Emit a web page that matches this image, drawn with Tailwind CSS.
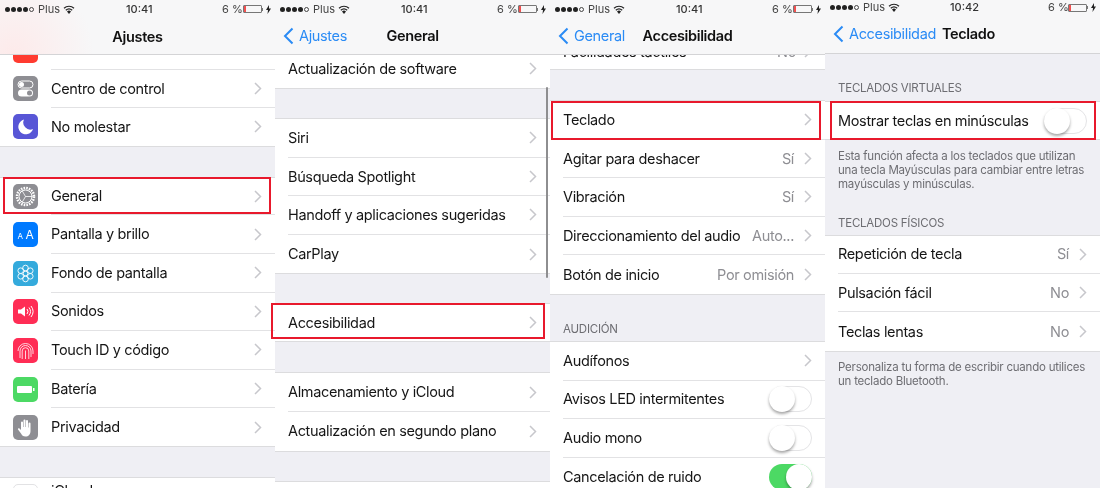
<!DOCTYPE html>
<html lang="es">
<head>
<meta charset="utf-8">
<script src="https://cdn.jsdelivr.net/npm/@tailwindcss/browser@4"></script>
</head>
<body class="m-0 bg-[#efeff4]">
<div class="relative flex h-[488px] w-[1100px] overflow-hidden font-['Inter','Liberation_Sans',sans-serif] text-[14.5px] tracking-[-0.35px] text-[#161616]">

<!-- PANEL 1 -->
<section class="relative h-full w-[275px] shrink-0 overflow-hidden bg-[#efeff4] blur-[0.35px]">
  <header class="relative z-10 h-[55px] border-b border-[#d4d4d6] bg-[radial-gradient(circle_at_5%_100%,#fdeaea_0,#f7f7f8_30%)]">
    <div class="flex h-[18px] items-center whitespace-nowrap pl-[5px] text-[11px] tracking-normal">
      <div class="flex w-[33px] shrink-0 items-center gap-[1px]"><i class="size-[5px] rounded-full bg-[#222]"></i><i class="size-[5px] rounded-full bg-[#222]"></i><i class="size-[5px] rounded-full bg-[#222]"></i><i class="size-[5px] rounded-full bg-[#222]"></i><i class="size-[5px] rounded-full border border-[#444]"></i></div>
      <span class="w-[25px] shrink-0 text-[#444]">Plus</span>
      <svg class="w-[12px] shrink-0" viewBox="0 0 12 9" height="9"><path d="M6 9 4 6.5a3 3 0 0 1 4 0Z" fill="#222"/><path d="M2.8 5.2a4.8 4.8 0 0 1 6.4 0M1 3.2a7.4 7.4 0 0 1 10 0" fill="none" stroke="#222" stroke-width="1.2"/></svg>
      <span class="ml-[51px] w-[96px] shrink-0 font-medium text-[#333]">10:41</span>
      <span class="w-[21px] shrink-0 text-[#444]">6 %</span>
      <div class="flex h-[8px] w-[19px] shrink-0 rounded-[1px] border border-[#777]"><div class="h-full w-[1.5px] bg-[#f05050]"></div></div>
      <i class="h-[3px] w-[1px] shrink-0 bg-[#777]"></i>
      <svg class="ml-[3px] shrink-0" width="5" height="9" viewBox="0 0 5 9"><path d="M3 0 0 5h2L1.5 9 5 3.5H3Z" fill="#222"/></svg>
    </div>
    <h1 class="mt-[8px] text-center text-[14.5px] font-semibold text-[#111]">Ajustes</h1>
  </header>
  <div class="-mt-[24px]">
    <div class="flex h-[38.6px] items-center bg-white pl-[13px]">
      <div class="size-[25px] shrink-0 rounded-[5px] bg-[#ff3b30]"></div>
      <div class="ml-[13px] flex h-full flex-1 border-b border-[#e2e2e4]"></div>
    </div>
    <div class="flex h-[38.6px] items-center bg-white pl-[13px]">
      <svg class="size-[25px] shrink-0" viewBox="0 0 25 25"><rect width="25" height="25" rx="5" fill="#8e8e93"/><rect x="5" y="5" width="15" height="7" rx="3.5" fill="none" stroke="#fff"/><circle cx="8.5" cy="8.5" r="2.5" fill="#fff"/><rect x="5" y="13.5" width="15" height="7" rx="3.5" fill="#fff"/><circle cx="16.5" cy="17" r="2.5" fill="#8e8e93"/></svg>
      <div class="ml-[13px] flex h-full flex-1 items-center justify-between border-b border-[#e2e2e4] pr-[13px]"><span>Centro de control</span><svg width="8" height="13" viewBox="0 0 8 13"><path d="m1 1 5.5 5.5L1 12" fill="none" stroke="#c7c7cc" stroke-width="1.5"/></svg></div>
    </div>
    <div class="flex h-[38.6px] items-center border-b border-[#dcdcde] bg-white pl-[13px]">
      <svg class="size-[25px] shrink-0" viewBox="0 0 25 25"><rect width="25" height="25" rx="5" fill="#5856d6"/><path d="M11 5.5a7.5 7.5 0 1 0 9 9.5 7 7 0 0 1-9-9.5Z" fill="#fff"/></svg>
      <div class="ml-[13px] flex h-full flex-1 items-center justify-between pr-[13px]"><span>No molestar</span><svg width="8" height="13" viewBox="0 0 8 13"><path d="m1 1 5.5 5.5L1 12" fill="none" stroke="#c7c7cc" stroke-width="1.5"/></svg></div>
    </div>
    <div class="h-[30px]"></div>
    <div class="flex h-[38.6px] items-center border-t border-[#dcdcde] bg-white pl-[13px]">
      <svg class="size-[25px] shrink-0" viewBox="0 0 25 25"><rect width="25" height="25" rx="5" fill="#8e8e93"/><circle cx="12.5" cy="12.5" r="8.5" fill="none" stroke="#fff" stroke-width="2.5" stroke-dasharray="1.6 1.1"/><circle cx="12.5" cy="12.5" r="6.5" fill="none" stroke="#fff" stroke-width="1"/><path d="M12.5 12.5 9 6.5M12.5 12.5h7M12.5 12.5 9 18.5" stroke="#fff" stroke-width=".8"/></svg>
      <div class="ml-[13px] flex h-full flex-1 items-center justify-between border-b border-[#e2e2e4] pr-[13px]"><span>General</span><svg width="8" height="13" viewBox="0 0 8 13"><path d="m1 1 5.5 5.5L1 12" fill="none" stroke="#c7c7cc" stroke-width="1.5"/></svg></div>
    </div>
    <div class="flex h-[38.6px] items-center bg-white pl-[13px]">
      <div class="flex size-[25px] shrink-0 items-baseline justify-center gap-[3px] rounded-[5px] bg-[#007aff] text-white"><span class="text-[8px] leading-[25px]">A</span><span class="text-[12px] leading-[25px]">A</span></div>
      <div class="ml-[13px] flex h-full flex-1 items-center justify-between border-b border-[#e2e2e4] pr-[13px]"><span>Pantalla y brillo</span><svg width="8" height="13" viewBox="0 0 8 13"><path d="m1 1 5.5 5.5L1 12" fill="none" stroke="#c7c7cc" stroke-width="1.5"/></svg></div>
    </div>
    <div class="flex h-[38.6px] items-center bg-white pl-[13px]">
      <svg class="size-[25px] shrink-0" viewBox="0 0 25 25" fill="none" stroke="#fff" stroke-width=".9"><rect width="25" height="25" rx="5" fill="#34aadc" stroke="none"/><circle cx="12.5" cy="12.5" r="2.3"/><circle cx="12.5" cy="7" r="2.8"/><circle cx="12.5" cy="18" r="2.8"/><circle cx="7.7" cy="9.7" r="2.8"/><circle cx="17.3" cy="9.7" r="2.8"/><circle cx="7.7" cy="15.3" r="2.8"/><circle cx="17.3" cy="15.3" r="2.8"/></svg>
      <div class="ml-[13px] flex h-full flex-1 items-center justify-between border-b border-[#e2e2e4] pr-[13px]"><span>Fondo de pantalla</span><svg width="8" height="13" viewBox="0 0 8 13"><path d="m1 1 5.5 5.5L1 12" fill="none" stroke="#c7c7cc" stroke-width="1.5"/></svg></div>
    </div>
    <div class="flex h-[38.6px] items-center bg-white pl-[13px]">
      <svg class="size-[25px] shrink-0" viewBox="0 0 25 25"><rect width="25" height="25" rx="5" fill="#ff2d55"/><path d="M5 10.5h3l4-3v10l-4-3H5Z" fill="#fff"/><path d="M14 10a4 4 0 0 1 0 5M16 8.5a6.5 6.5 0 0 1 0 8M18 7a9 9 0 0 1 0 11" fill="none" stroke="#fff"/></svg>
      <div class="ml-[13px] flex h-full flex-1 items-center justify-between border-b border-[#e2e2e4] pr-[13px]"><span>Sonidos</span><svg width="8" height="13" viewBox="0 0 8 13"><path d="m1 1 5.5 5.5L1 12" fill="none" stroke="#c7c7cc" stroke-width="1.5"/></svg></div>
    </div>
    <div class="flex h-[38.6px] items-center bg-white pl-[13px]">
      <svg class="size-[25px] shrink-0" viewBox="0 0 25 25" fill="none" stroke="#fff" stroke-width=".8"><rect width="25" height="25" rx="5" fill="#ff2d55" stroke="none"/><path d="M5 13a7.5 7.5 0 0 1 15 0v3M7 20v-7a5.5 5.5 0 0 1 11 0v6M9.2 21v-8a3.3 3.3 0 0 1 6.6 0v8M12.5 21v-8.5"/></svg>
      <div class="ml-[13px] flex h-full flex-1 items-center justify-between border-b border-[#e2e2e4] pr-[13px]"><span>Touch ID y código</span><svg width="8" height="13" viewBox="0 0 8 13"><path d="m1 1 5.5 5.5L1 12" fill="none" stroke="#c7c7cc" stroke-width="1.5"/></svg></div>
    </div>
    <div class="flex h-[38.6px] items-center bg-white pl-[13px]">
      <svg class="size-[25px] shrink-0" viewBox="0 0 25 25"><rect width="25" height="25" rx="5" fill="#4cd964"/><rect x="4" y="9" width="15" height="7" rx="1" fill="#fff"/><rect x="20" y="11" width="1.5" height="3" fill="#fff"/></svg>
      <div class="ml-[13px] flex h-full flex-1 items-center justify-between border-b border-[#e2e2e4] pr-[13px]"><span>Batería</span><svg width="8" height="13" viewBox="0 0 8 13"><path d="m1 1 5.5 5.5L1 12" fill="none" stroke="#c7c7cc" stroke-width="1.5"/></svg></div>
    </div>
    <div class="flex h-[38.6px] items-center border-b border-[#dcdcde] bg-white pl-[13px]">
      <svg class="size-[25px] shrink-0" viewBox="0 0 25 25"><rect width="25" height="25" rx="5" fill="#8e8e93"/><path d="M8 13V7.5a1 1 0 0 1 2 0V12h.5V5.5a1 1 0 0 1 2 0V12h.5V6a1 1 0 0 1 2 0v6.5h.5V8.5a1 1 0 0 1 2 0V16c0 3.5-2 5.5-5 5.5-2.5 0-3.5-1-4.5-3L5 14.500c-.5-1 .8-1.800 1.500-1L8 15Z" fill="#fff"/></svg>
      <div class="ml-[13px] flex h-full flex-1 items-center justify-between pr-[13px]"><span>Privacidad</span><svg width="8" height="13" viewBox="0 0 8 13"><path d="m1 1 5.5 5.5L1 12" fill="none" stroke="#c7c7cc" stroke-width="1.5"/></svg></div>
    </div>
    <div class="h-[30px]"></div>
    <div class="flex h-[38.6px] items-start border-t border-[#dcdcde] bg-white pl-[13px] pt-[6px]">
      <div class="size-[25px] shrink-0 rounded-[5px] border border-[#e2e2e4] bg-white"></div>
      <div class="ml-[13px] -mt-[4px]">iCloud</div>
    </div>
  </div>
</section>

<!-- PANEL 2 -->
<section class="relative h-full w-[275px] shrink-0 overflow-hidden bg-[#efeff4] blur-[0.35px]">
  <header class="relative z-10 h-[55px] border-b border-[#d4d4d6] bg-[#f7f7f8]">
    <div class="flex h-[18px] items-center whitespace-nowrap pl-[5px] text-[11px] tracking-normal">
      <div class="flex w-[33px] shrink-0 items-center gap-[1px]"><i class="size-[5px] rounded-full bg-[#222]"></i><i class="size-[5px] rounded-full bg-[#222]"></i><i class="size-[5px] rounded-full bg-[#222]"></i><i class="size-[5px] rounded-full bg-[#222]"></i><i class="size-[5px] rounded-full border border-[#444]"></i></div>
      <span class="w-[25px] shrink-0 text-[#444]">Plus</span>
      <svg class="w-[12px] shrink-0" viewBox="0 0 12 9" height="9"><path d="M6 9 4 6.5a3 3 0 0 1 4 0Z" fill="#222"/><path d="M2.8 5.2a4.8 4.8 0 0 1 6.4 0M1 3.2a7.4 7.4 0 0 1 10 0" fill="none" stroke="#222" stroke-width="1.2"/></svg>
      <span class="ml-[51px] w-[96px] shrink-0 font-medium text-[#333]">10:41</span>
      <span class="w-[21px] shrink-0 text-[#444]">6 %</span>
      <div class="flex h-[8px] w-[19px] shrink-0 rounded-[1px] border border-[#777]"><div class="h-full w-[1.5px] bg-[#f05050]"></div></div>
      <i class="h-[3px] w-[1px] shrink-0 bg-[#777]"></i>
      <svg class="ml-[3px] shrink-0" width="5" height="9" viewBox="0 0 5 9"><path d="M3 0 0 5h2L1.5 9 5 3.5H3Z" fill="#222"/></svg>
    </div>
    <div class="relative mt-[7px] flex items-center pl-[8px] text-[14.5px]">
      <svg width="11" height="18" viewBox="0 0 11 18"><path d="M9.5 1.5 2 9l7.5 7.5" fill="none" stroke="#2a8bf5" stroke-width="2"/></svg>
      <span class="ml-[5px] text-[#2a8bf5]">Ajustes</span>
      <h1 class="absolute inset-x-0 text-center font-semibold text-[#111]">General</h1>
    </div>
  </header>
  <div class="-mt-[5.6px]">
    <div class="flex h-[39.6px] items-center justify-between border-b border-[#dcdcde] bg-white px-[13px]"><span>Actualización de software</span><svg width="8" height="13" viewBox="0 0 8 13"><path d="m1 1 5.5 5.5L1 12" fill="none" stroke="#c7c7cc" stroke-width="1.5"/></svg></div>
    <div class="h-[29px]"></div>
    <div class="border-y border-[#dcdcde] bg-white pl-[13px]">
      <div class="flex h-[38.6px] items-center justify-between border-b border-[#e2e2e4] pr-[13px]"><span>Siri</span><svg width="8" height="13" viewBox="0 0 8 13"><path d="m1 1 5.5 5.5L1 12" fill="none" stroke="#c7c7cc" stroke-width="1.5"/></svg></div>
      <div class="flex h-[38.6px] items-center justify-between border-b border-[#e2e2e4] pr-[13px]"><span>Búsqueda Spotlight</span><svg width="8" height="13" viewBox="0 0 8 13"><path d="m1 1 5.5 5.5L1 12" fill="none" stroke="#c7c7cc" stroke-width="1.5"/></svg></div>
      <div class="flex h-[38.6px] items-center justify-between border-b border-[#e2e2e4] pr-[13px]"><span>Handoff y aplicaciones sugeridas</span><svg width="8" height="13" viewBox="0 0 8 13"><path d="m1 1 5.5 5.5L1 12" fill="none" stroke="#c7c7cc" stroke-width="1.5"/></svg></div>
      <div class="flex h-[38.6px] items-center justify-between pr-[13px]"><span>CarPlay</span><svg width="8" height="13" viewBox="0 0 8 13"><path d="m1 1 5.5 5.5L1 12" fill="none" stroke="#c7c7cc" stroke-width="1.5"/></svg></div>
    </div>
    <div class="h-[29px]"></div>
    <div class="flex h-[39px] items-center justify-between border-y border-[#dcdcde] bg-white px-[13px]"><span>Accesibilidad</span><svg width="8" height="13" viewBox="0 0 8 13"><path d="m1 1 5.5 5.5L1 12" fill="none" stroke="#c7c7cc" stroke-width="1.5"/></svg></div>
    <div class="h-[30px]"></div>
    <div class="border-y border-[#dcdcde] bg-white pl-[13px]">
      <div class="flex h-[38.6px] items-center justify-between border-b border-[#e2e2e4] pr-[13px]"><span>Almacenamiento y iCloud</span><svg width="8" height="13" viewBox="0 0 8 13"><path d="m1 1 5.5 5.5L1 12" fill="none" stroke="#c7c7cc" stroke-width="1.5"/></svg></div>
      <div class="flex h-[38.6px] items-center justify-between pr-[13px]"><span>Actualización en segundo plano</span><svg width="8" height="13" viewBox="0 0 8 13"><path d="m1 1 5.5 5.5L1 12" fill="none" stroke="#c7c7cc" stroke-width="1.5"/></svg></div>
    </div>
    <div class="h-[29px]"></div>
    <div class="h-[39px] border-t border-[#dcdcde] bg-white"></div>
  </div>
  <div class="absolute right-[2px] top-[87px] h-[191px] w-[2.5px] rounded-full bg-[#8e8e90]"></div>
</section>

<!-- PANEL 3 -->
<section class="relative h-full w-[275px] shrink-0 overflow-hidden bg-[#efeff4] blur-[0.35px]">
  <header class="relative z-10 h-[55px] border-b border-[#d4d4d6] bg-[#f7f7f8]">
    <div class="flex h-[18px] items-center whitespace-nowrap pl-[5px] text-[11px] tracking-normal">
      <div class="flex w-[33px] shrink-0 items-center gap-[1px]"><i class="size-[5px] rounded-full bg-[#222]"></i><i class="size-[5px] rounded-full bg-[#222]"></i><i class="size-[5px] rounded-full bg-[#222]"></i><i class="size-[5px] rounded-full bg-[#222]"></i><i class="size-[5px] rounded-full border border-[#444]"></i></div>
      <span class="w-[25px] shrink-0 text-[#444]">Plus</span>
      <svg class="w-[12px] shrink-0" viewBox="0 0 12 9" height="9"><path d="M6 9 4 6.5a3 3 0 0 1 4 0Z" fill="#222"/><path d="M2.8 5.2a4.8 4.8 0 0 1 6.4 0M1 3.2a7.4 7.4 0 0 1 10 0" fill="none" stroke="#222" stroke-width="1.2"/></svg>
      <span class="ml-[51px] w-[96px] shrink-0 font-medium text-[#333]">10:41</span>
      <span class="w-[21px] shrink-0 text-[#444]">6 %</span>
      <div class="flex h-[8px] w-[19px] shrink-0 rounded-[1px] border border-[#777]"><div class="h-full w-[1.5px] bg-[#f05050]"></div></div>
      <i class="h-[3px] w-[1px] shrink-0 bg-[#777]"></i>
      <svg class="ml-[3px] shrink-0" width="5" height="9" viewBox="0 0 5 9"><path d="M3 0 0 5h2L1.5 9 5 3.5H3Z" fill="#222"/></svg>
    </div>
    <div class="relative mt-[7px] flex items-center pl-[8px] text-[14.5px]">
      <svg width="11" height="18" viewBox="0 0 11 18"><path d="M9.5 1.5 2 9l7.5 7.5" fill="none" stroke="#2a8bf5" stroke-width="2"/></svg>
      <span class="ml-[5px] text-[#2a8bf5]">General</span>
      <h1 class="absolute inset-x-0 text-center font-semibold text-[#111]">Accesibilidad</h1>
    </div>
  </header>
  <div class="-mt-[24px]">
    <div class="flex h-[39px] items-center justify-between border-b border-[#dcdcde] bg-white px-[13px] pt-[3px]"><span>Facilidades táctiles</span><span class="flex items-center gap-[8px] text-[#8e8e93]">No<svg width="8" height="13" viewBox="0 0 8 13"><path d="m1 1 5.5 5.5L1 12" fill="none" stroke="#c7c7cc" stroke-width="1.5"/></svg></span></div>
    <div class="h-[30px]"></div>
    <div class="border-y border-[#dcdcde] bg-white pl-[13px]">
      <div class="flex h-[38.6px] items-center justify-between border-b border-[#e2e2e4] pr-[13px]"><span>Teclado</span><svg width="8" height="13" viewBox="0 0 8 13"><path d="m1 1 5.5 5.5L1 12" fill="none" stroke="#c7c7cc" stroke-width="1.5"/></svg></div>
      <div class="flex h-[38.6px] items-center justify-between border-b border-[#e2e2e4] pr-[13px]"><span>Agitar para deshacer</span><span class="flex items-center gap-[10px] text-[#8e8e93]">Sí<svg width="8" height="13" viewBox="0 0 8 13"><path d="m1 1 5.5 5.5L1 12" fill="none" stroke="#c7c7cc" stroke-width="1.5"/></svg></span></div>
      <div class="flex h-[38.6px] items-center justify-between border-b border-[#e2e2e4] pr-[13px]"><span>Vibración</span><span class="flex items-center gap-[10px] text-[#8e8e93]">Sí<svg width="8" height="13" viewBox="0 0 8 13"><path d="m1 1 5.5 5.5L1 12" fill="none" stroke="#c7c7cc" stroke-width="1.5"/></svg></span></div>
      <div class="flex h-[38.6px] items-center justify-between border-b border-[#e2e2e4] pr-[13px]"><span>Direccionamiento del audio</span><span class="flex items-center gap-[10px] text-[#8e8e93]">Auto...<svg width="8" height="13" viewBox="0 0 8 13"><path d="m1 1 5.5 5.5L1 12" fill="none" stroke="#c7c7cc" stroke-width="1.5"/></svg></span></div>
      <div class="flex h-[38.6px] items-center justify-between pr-[13px]"><span>Botón de inicio</span><span class="flex items-center gap-[10px] text-[#8e8e93]">Por omisión<svg width="8" height="13" viewBox="0 0 8 13"><path d="m1 1 5.5 5.5L1 12" fill="none" stroke="#c7c7cc" stroke-width="1.5"/></svg></span></div>
    </div>
    <div class="flex h-[46px] items-end pb-[3px] pl-[13px] text-[11.5px] tracking-[-0.23px] text-[#6d6d72]">AUDICIÓN</div>
    <div class="border-t border-[#dcdcde] bg-white pl-[13px]">
      <div class="flex h-[38.6px] items-center justify-between border-b border-[#e2e2e4] pr-[13px]"><span>Audífonos</span><svg width="8" height="13" viewBox="0 0 8 13"><path d="m1 1 5.5 5.5L1 12" fill="none" stroke="#c7c7cc" stroke-width="1.5"/></svg></div>
      <div class="flex h-[38.6px] items-center justify-between border-b border-[#e2e2e4] pr-[13px]"><span>Avisos LED intermitentes</span><div class="relative h-[26px] w-[43px] rounded-full border border-[#e4e4e6] bg-white"><div class="absolute -left-px -top-px size-[26px] rounded-full bg-white shadow-[0_2px_3px_rgba(0,0,0,0.35)]"></div></div></div>
      <div class="flex h-[38.6px] items-center justify-between border-b border-[#e2e2e4] pr-[13px]"><span>Audio mono</span><div class="relative h-[26px] w-[43px] rounded-full border border-[#e4e4e6] bg-white"><div class="absolute -left-px -top-px size-[26px] rounded-full bg-white shadow-[0_2px_3px_rgba(0,0,0,0.35)]"></div></div></div>
      <div class="flex h-[38.6px] items-center justify-between pr-[13px]"><span>Cancelación de ruido</span><div class="relative h-[26px] w-[43px] rounded-full bg-[#4cd964]"><div class="absolute right-0 top-0 size-[26px] rounded-full bg-white shadow-[0_2px_3px_rgba(0,0,0,0.35)]"></div></div></div>
    </div>
  </div>
</section>

<!-- PANEL 4 -->
<section class="relative h-full w-[275px] shrink-0 overflow-hidden bg-[#efeff4] blur-[0.35px]">
  <header class="relative z-10 h-[54px] border-b border-[#d4d4d6] bg-[#f7f7f8]">
    <div class="flex h-[15px] items-center whitespace-nowrap pl-[5px] text-[11px] tracking-normal">
      <div class="flex w-[33px] shrink-0 items-center gap-[1px]"><i class="size-[5px] rounded-full bg-[#222]"></i><i class="size-[5px] rounded-full bg-[#222]"></i><i class="size-[5px] rounded-full bg-[#222]"></i><i class="size-[5px] rounded-full bg-[#222]"></i><i class="size-[5px] rounded-full border border-[#444]"></i></div>
      <span class="w-[25px] shrink-0 text-[#444]">Plus</span>
      <svg class="w-[12px] shrink-0" viewBox="0 0 12 9" height="9"><path d="M6 9 4 6.5a3 3 0 0 1 4 0Z" fill="#222"/><path d="M2.8 5.2a4.8 4.8 0 0 1 6.4 0M1 3.2a7.4 7.4 0 0 1 10 0" fill="none" stroke="#222" stroke-width="1.2"/></svg>
      <span class="ml-[50px] w-[98px] shrink-0 font-medium text-[#333]">10:42</span>
      <span class="w-[20px] shrink-0 text-[#444]">6 %</span>
      <div class="flex h-[8px] w-[19px] shrink-0 rounded-[1px] border border-[#777]"><div class="h-full w-[1.5px] bg-[#f05050]"></div></div>
      <i class="h-[3px] w-[1px] shrink-0 bg-[#777]"></i>
      <svg class="ml-[3px] shrink-0" width="5" height="9" viewBox="0 0 5 9"><path d="M3 0 0 5h2L1.5 9 5 3.5H3Z" fill="#222"/></svg>
    </div>
    <div class="mt-[8px] flex items-center pl-[8px] text-[14.5px]">
      <svg width="11" height="18" viewBox="0 0 11 18"><path d="M9.5 1.5 2 9l7.5 7.5" fill="none" stroke="#2a8bf5" stroke-width="2"/></svg>
      <span class="ml-[5px] text-[#2a8bf5]">Accesibilidad</span>
      <h1 class="ml-[6px] font-semibold text-[#111]">Teclado</h1>
    </div>
  </header>
  <div class="flex h-[47px] items-end pb-[4px] pl-[13px] text-[11.5px] tracking-[-0.23px] text-[#6d6d72]">TECLADOS VIRTUALES</div>
  <div class="flex h-[39px] items-center justify-between border-y border-[#dcdcde] bg-white px-[13px]"><span>Mostrar teclas en minúsculas</span><div class="relative h-[26px] w-[43px] rounded-full border border-[#e4e4e6] bg-white"><div class="absolute -left-px -top-px size-[26px] rounded-full bg-white shadow-[0_2px_3px_rgba(0,0,0,0.35)]"></div></div></div>
  <p class="mt-[9px] whitespace-nowrap px-[13px] text-[11.5px] leading-[14px] tracking-[-0.23px] text-[#6d6d72]">Esta función afecta a los teclados que utilizan<br>una tecla Mayúsculas para cambiar entre letras<br>mayúsculas y minúsculas.</p>
  <div class="flex h-[43.5px] items-end pb-[2px] pl-[13px] text-[11.5px] tracking-[-0.23px] text-[#6d6d72]">TECLADOS FÍSICOS</div>
  <div class="border-y border-[#dcdcde] bg-white pl-[13px]">
    <div class="flex h-[38.4px] items-center justify-between border-b border-[#e2e2e4] pr-[13px]"><span>Repetición de tecla</span><span class="flex items-center gap-[10px] text-[#8e8e93]">Sí<svg width="8" height="13" viewBox="0 0 8 13"><path d="m1 1 5.5 5.5L1 12" fill="none" stroke="#c7c7cc" stroke-width="1.5"/></svg></span></div>
    <div class="flex h-[38.4px] items-center justify-between border-b border-[#e2e2e4] pr-[13px]"><span>Pulsación fácil</span><span class="flex items-center gap-[10px] text-[#8e8e93]">No<svg width="8" height="13" viewBox="0 0 8 13"><path d="m1 1 5.5 5.5L1 12" fill="none" stroke="#c7c7cc" stroke-width="1.5"/></svg></span></div>
    <div class="flex h-[38.4px] items-center justify-between pr-[13px]"><span>Teclas lentas</span><span class="flex items-center gap-[10px] text-[#8e8e93]">No<svg width="8" height="13" viewBox="0 0 8 13"><path d="m1 1 5.5 5.5L1 12" fill="none" stroke="#c7c7cc" stroke-width="1.5"/></svg></span></div>
  </div>
  <p class="mt-[8px] whitespace-nowrap px-[13px] text-[11.5px] leading-[14px] tracking-[-0.23px] text-[#6d6d72]">Personaliza tu forma de escribir cuando utilices<br>un teclado Bluetooth.</p>
</section>

<!-- Red highlight boxes -->
<div class="absolute left-[3px] top-[177px] z-20 h-[37px] w-[268px] border-2 border-[#e8192c]"></div>
<div class="absolute left-[271px] top-[303px] z-20 h-[36px] w-[274px] border-2 border-[#e8192c]"></div>
<div class="absolute left-[551px] top-[101px] z-20 h-[39px] w-[270px] border-2 border-[#e8192c]"></div>
<div class="absolute left-[830px] top-[101px] z-20 h-[39px] w-[266px] border-2 border-[#e8192c]"></div>
</div>
</body>
</html>
